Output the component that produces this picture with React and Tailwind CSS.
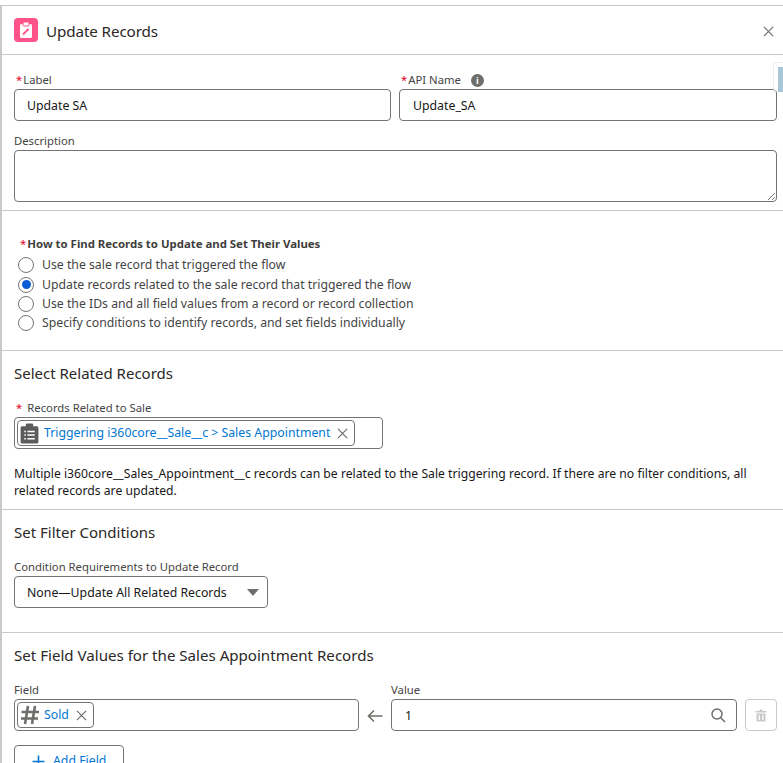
import React from "react";

function Star({ className = "" }) {
  return <span className={"text-[#ea001e] " + className}>*</span>;
}

function Radio({ checked, label, className = "" }) {
  return (
    <div className={"flex items-center h-[19px] " + className}>
      <span className="w-[16px] h-[16px] rounded-full border border-[#747474] bg-white flex items-center justify-center shrink-0 ml-[16px]">
        {checked && <span className="w-[9px] h-[9px] rounded-full bg-[#0b5cd5]" />}
      </span>
      <span className="ml-[8px] pt-[2px] text-[12.25px] text-[#444444]">{label}</span>
    </div>
  );
}

function Cross({ size = 11, color = "#706e6b", w = 1.3 }) {
  return (
    <svg width={size} height={size} viewBox="0 0 12 12" fill="none" stroke={color} strokeWidth={w}>
      <path d="M1 1 L11 11 M11 1 L1 11" />
    </svg>
  );
}

export default function App() {
  return (
    <div className="w-[783px] h-[763px] overflow-hidden bg-white relative pt-[5px] text-[#181818] font-['Noto_Sans','Open_Sans',sans-serif]">
      <div className="border-t border-t-[#c9c9c9] border-l-2 border-l-[#c9c9c9] h-[758px] overflow-hidden">
        {/* Header */}
        <div className="h-[49px] border-b border-[#c9c9c9] flex items-center pl-[12px] pr-[8px]">
          <span className="w-[24px] h-[24px] rounded-[4px] bg-[#ff538a] flex items-center justify-center">
            <svg width="16" height="18" viewBox="0 0 16 18" fill="none">
              <rect x="2" y="3" width="12" height="14" rx="1.5" fill="white" />
              <rect x="5" y="1" width="6" height="4" rx="1" fill="white" stroke="#ff538a" strokeWidth="1" />
              <path d="M5 13.5 L10.5 8" stroke="#ff538a" strokeWidth="1.8" />
            </svg>
          </span>
          <span className="ml-[8px] pt-[2px] text-[15.2px] tracking-[-0.1px] text-[#2b2826]">Update Records</span>
          <span className="ml-auto mt-[3px] mr-[1px]">
            <Cross size={11} />
          </span>
        </div>

        {/* Basic fields */}
        <div className="h-[156px] border-b border-[#c9c9c9] pl-[12px] pr-[6px] pt-[17px]">
          <div className="grid grid-cols-[377px_378px] gap-x-[8px]">
            <div>
              <div className="h-[17px] text-[11.3px] leading-[15px] text-[#444444] pl-[2px]">
                <Star className="mr-[1px]" />Label
              </div>
              <div className="h-[32px] border border-[#747474] rounded-[4px] pl-[12px] pt-[2px] flex items-center text-[12.3px] text-[#181818]">Update SA</div>
            </div>
            <div>
              <div className="h-[17px] text-[11.3px] leading-[15px] text-[#444444] pl-[2px] pb-[2px] flex items-center">
                <Star className="mr-[1px]" />API Name
                <span className="ml-[10px] mt-[2px] w-[13px] h-[13px] rounded-full bg-[#706e6b] text-white text-[9px] font-bold leading-[13px] text-center">i</span>
              </div>
              <div className="h-[32px] border border-[#747474] rounded-[4px] pl-[13px] pt-[2px] flex items-center text-[12.3px] text-[#181818]">Update_SA</div>
            </div>
          </div>
          <div className="mt-[12px] h-[17px] text-[11.3px] leading-[15px] text-[#444444]">Description</div>
          <div className="relative h-[52px] w-[763px] border border-[#747474] rounded-[4px]">
            <svg className="absolute right-[1px] bottom-[1px]" width="8" height="8" viewBox="0 0 8 8" stroke="#555555" strokeWidth="0.8">
              <path d="M1 8 L8 1 M5 8 L8 5" />
            </svg>
          </div>
        </div>

        {/* Radios */}
        <div className="h-[140px] border-b border-[#c9c9c9] pt-[25px]">
          <div className="h-[15px] leading-[15px] pl-[18px] text-[11.4px] font-bold text-[#3e3e3c]">
            <Star className="mr-[1px] font-normal" />How to Find Records to Update and Set Their Values
          </div>
          <Radio className="mt-[4px]" label="Use the sale record that triggered the flow" />
          <Radio checked className="mt-[1px]" label="Update records related to the sale record that triggered the flow" />
          <Radio label="Use the IDs and all field values from a record or record collection" />
          <Radio label="Specify conditions to identify records, and set fields individually" />
        </div>

        {/* Select Related Records */}
        <div className="h-[159px] border-b border-[#c9c9c9] pl-[12px] pt-[12px]">
          <div className="h-[22px] leading-[20px] text-[15px] text-[#2b2826]">Select Related Records</div>
          <div className="mt-[15px] h-[17px] leading-[15px] text-[11.3px] text-[#444444] pl-[2px]">
            <Star className="mr-[5px]" />Records Related to Sale
          </div>
          <div className="h-[32px] w-[369px] border border-[#747474] rounded-[4px] flex items-center pl-[2px]">
            <div className="h-[26px] w-[338px] border border-[#747474] rounded-[4px] flex items-center pl-[2px]">
              <svg width="19" height="21" viewBox="0 0 18 20" fill="#5c5c5c">
                <path d="M2 3 H5.5 V1.5 Q5.5 0.5 6.5 0.5 H11.5 Q12.5 0.5 12.5 1.5 V3 H16 Q17.5 3 17.5 4.5 V18 Q17.5 19.5 16 19.5 H2 Q0.5 19.5 0.5 18 V4.5 Q0.5 3 2 3 Z" />
                <path d="M4 8 H5.5 M7 8 H14 M4 11.5 H5.5 M7 11.5 H14 M4 15 H5.5 M7 15 H14" stroke="white" strokeWidth="1.4" />
              </svg>
              <span className="ml-[5px] text-[12.3px] text-[#0176d3] whitespace-nowrap">Triggering i360core__Sale__c &gt; Sales Appointment</span>
              <span className="ml-[7px] flex"><Cross size={11} /></span>
            </div>
          </div>
          <p className="mt-[16px] w-[750px] text-[12.2px] leading-[17px] text-[#181818]">
            Multiple i360core__Sales_Appointment__c records can be related to the Sale triggering record. If there are no filter conditions, all related records are updated.
          </p>
        </div>

        {/* Set Filter Conditions */}
        <div className="h-[123px] border-b border-[#c9c9c9] pl-[12px] pt-[12px]">
          <div className="h-[22px] leading-[20px] text-[15px] text-[#2b2826]">Set Filter Conditions</div>
          <div className="mt-[15px] h-[17px] leading-[15px] text-[11.3px] text-[#444444]">Condition Requirements to Update Record</div>
          <div className="h-[32px] w-[254px] border border-[#747474] rounded-[4px] flex items-center pl-[12px] pr-[8px] text-[12.3px]">
            <span className="pt-[2px]">None—Update All Related Records</span>
            <svg className="ml-auto" width="12" height="7" viewBox="0 0 12 7" fill="#706e6b">
              <path d="M0 0 H12 L6 7 Z" />
            </svg>
          </div>
        </div>

        {/* Set Field Values */}
        <div className="pl-[12px] pt-[12px]">
          <div className="h-[22px] leading-[20px] text-[15.1px] text-[#2b2826]">Set Field Values for the Sales Appointment Records</div>
          <div className="mt-[15px] flex">
            <div className="w-[345px]">
              <div className="h-[17px] leading-[15px] text-[11.3px] text-[#444444]">Field</div>
              <div className="h-[32px] border border-[#747474] rounded-[4px] flex items-center pl-[2px]">
                <div className="h-[26px] w-[77px] border border-[#747474] rounded-[4px] flex items-center pl-[2px]">
                  <svg width="20" height="20" viewBox="0 0 20 20" fill="none" stroke="#706e6b" strokeWidth="2.6">
                    <path d="M8 1 L5 19 M15 1 L12 19 M1.5 7 H19 M1 13.5 H18" />
                  </svg>
                  <span className="ml-[4px] text-[12.3px] text-[#0176d3]">Sold</span>
                  <span className="ml-[7px] flex"><Cross size={11} /></span>
                </div>
              </div>
            </div>
            <div className="w-[32px] flex items-end justify-center h-[49px] pb-[8px]">
              <svg width="16" height="14" viewBox="0 0 16 14" fill="none" stroke="#706e6b" strokeWidth="1.6">
                <path d="M15.5 7 H1.5 M7 1.5 L1.5 7 L7 12.5" />
              </svg>
            </div>
            <div className="w-[346px]">
              <div className="h-[17px] leading-[15px] text-[11.3px] text-[#444444]">Value</div>
              <div className="h-[32px] border border-[#747474] rounded-[4px] flex items-center pl-[13px] pr-[10px] text-[12.3px]">
                <span className="pt-[2px]">1</span>
                <svg className="ml-auto" width="15" height="15" viewBox="0 0 15 15" fill="none" stroke="#706e6b" strokeWidth="1.5">
                  <circle cx="6" cy="6" r="5" />
                  <path d="M9.5 9.5 L14 14" />
                </svg>
              </div>
            </div>
            <div className="ml-[8px] mt-[17px] w-[32px] h-[32px] border border-[#c9c9c9] rounded-[4px] flex items-center justify-center">
              <svg width="12" height="13" viewBox="0 0 12 13" fill="#c9c9c9">
                <path d="M4.5 0.5 H7.5 V2 H11.5 V3.5 H0.5 V2 H4.5 Z" />
                <path d="M1.5 4.5 H10.5 V12.5 H1.5 Z M3.5 6 V11 H4.8 V6 Z M7.2 6 V11 H8.5 V6 Z" fillRule="evenodd" />
              </svg>
            </div>
          </div>
          <div className="mt-[14px] h-[32px] w-[110px] border border-[#747474] rounded-[4px] flex items-center pl-[17px] text-[12.3px] text-[#0176d3]">
            <svg width="13" height="13" viewBox="0 0 13 13" stroke="#0176d3" strokeWidth="1.6">
              <path d="M6.5 0.5 V12.5 M0.5 6.5 H12.5" />
            </svg>
            <span className="ml-[8px]">Add Field</span>
          </div>
        </div>
      </div>

      {/* Scroll handle over the panel edge */}
      <div className="absolute left-[773px] top-[62px] w-[10px] h-[29px] bg-white rounded-l-[4px] border border-r-0 border-[#eeeeee] pl-[4px] pt-[4px]">
        <div className="w-[6px] h-[25px] bg-[#a8c6d6]" />
      </div>
    </div>
  );
}
